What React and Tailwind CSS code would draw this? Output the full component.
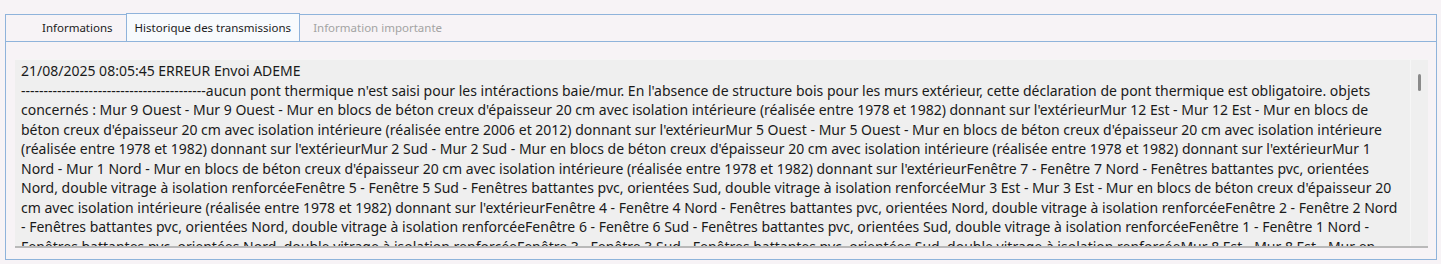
const lines = [
  '21/08/2025 08:05:45 ERREUR Envoi ADEME',
  "-----------------------------------------aucun pont thermique n'est saisi pour les intéractions baie/mur. En l'absence de structure bois pour les murs extérieur, cette déclaration de pont thermique est obligatoire. objets",
  "concernés : Mur 9 Ouest - Mur 9 Ouest - Mur en blocs de béton creux d'épaisseur 20 cm avec isolation intérieure (réalisée entre 1978 et 1982) donnant sur l'extérieurMur 12 Est - Mur 12 Est - Mur en blocs de",
  "béton creux d'épaisseur 20 cm avec isolation intérieure (réalisée entre 2006 et 2012) donnant sur l'extérieurMur 5 Ouest - Mur 5 Ouest - Mur en blocs de béton creux d'épaisseur 20 cm avec isolation intérieure",
  "(réalisée entre 1978 et 1982) donnant sur l'extérieurMur 2 Sud - Mur 2 Sud - Mur en blocs de béton creux d'épaisseur 20 cm avec isolation intérieure (réalisée entre 1978 et 1982) donnant sur l'extérieurMur 1",
  "Nord - Mur 1 Nord - Mur en blocs de béton creux d'épaisseur 20 cm avec isolation intérieure (réalisée entre 1978 et 1982) donnant sur l'extérieurFenêtre 7 - Fenêtre 7 Nord - Fenêtres battantes pvc, orientées",
  "Nord, double vitrage à isolation renforcéeFenêtre 5 - Fenêtre 5 Sud - Fenêtres battantes pvc, orientées Sud, double vitrage à isolation renforcéeMur 3 Est - Mur 3 Est - Mur en blocs de béton creux d'épaisseur 20",
  "cm avec isolation intérieure (réalisée entre 1978 et 1982) donnant sur l'extérieurFenêtre 4 - Fenêtre 4 Nord - Fenêtres battantes pvc, orientées Nord, double vitrage à isolation renforcéeFenêtre 2 - Fenêtre 2 Nord",
  '- Fenêtres battantes pvc, orientées Nord, double vitrage à isolation renforcéeFenêtre 6 - Fenêtre 6 Sud - Fenêtres battantes pvc, orientées Sud, double vitrage à isolation renforcéeFenêtre 1 - Fenêtre 1 Nord -',
  "Fenêtres battantes pvc, orientées Nord, double vitrage à isolation renforcéeFenêtre 3 - Fenêtre 3 Sud - Fenêtres battantes pvc, orientées Sud, double vitrage à isolation renforcéeMur 8 Est - Mur 8 Est - Mur en",
];

const tabs = [
  { label: 'Informations', state: 'idle' },
  { label: 'Historique des transmissions', state: 'active' },
  { label: 'Information importante', state: 'disabled' },
];

const Tab = ({ label, state }) => {
  if (state === 'active') {
    return (
      <div className="h-[28px] -mt-[1px] px-[8px] flex items-center border-x border-t border-[#8fb3db] bg-[#f7fafd] text-[#1b1b1b]">
        {label}
      </div>
    );
  }
  return (
    <div
      className={
        'h-[27px] flex items-center ' +
        (state === 'disabled' ? 'px-[13px] text-[#a3a3a3]' : 'pl-[36px] pr-[13px] text-[#1b1b1b]')
      }
    >
      {label}
    </div>
  );
};

export default function App() {
  return (
    <div className="w-[1441px] h-[264px] bg-[#f7f3f6] pt-[14px] pl-[5px] pr-[4px] pb-[4px] font-['Noto_Sans','Open_Sans',sans-serif]">
      <div className="h-[246px] border border-[#8fb3db] flex flex-col">
        {/* tab strip */}
        <div className="h-[27px] flex items-end border-b border-[#8fb3db] text-[11.5px]">
          {tabs.map((t) => (
            <Tab key={t.label} label={t.label} state={t.state} />
          ))}
        </div>
        {/* panel */}
        <div className="flex-1 pt-[17px] pl-[9px] pr-[8px] pb-[10px]">
          <div className="h-[189px] flex bg-[#efefef] border-t border-[#f5f5f5] border-b-2 border-b-[#b9b9b9]">
            <div className="flex-1 overflow-hidden pl-[6px] pt-[1px] text-[14px] leading-[19.5px] text-[#1a1a1a]">
              {lines.map((l, i) => (
                <div key={i} className="whitespace-nowrap">
                  {l}
                </div>
              ))}
            </div>
            <div className="w-[18px] border-l border-[#f6f6f6] bg-[#efefef] flex justify-center pt-[14px]">
              <div className="w-[3px] h-[17px] rounded-full bg-[#8a8a8a]" />
            </div>
          </div>
        </div>
      </div>
    </div>
  );
}
